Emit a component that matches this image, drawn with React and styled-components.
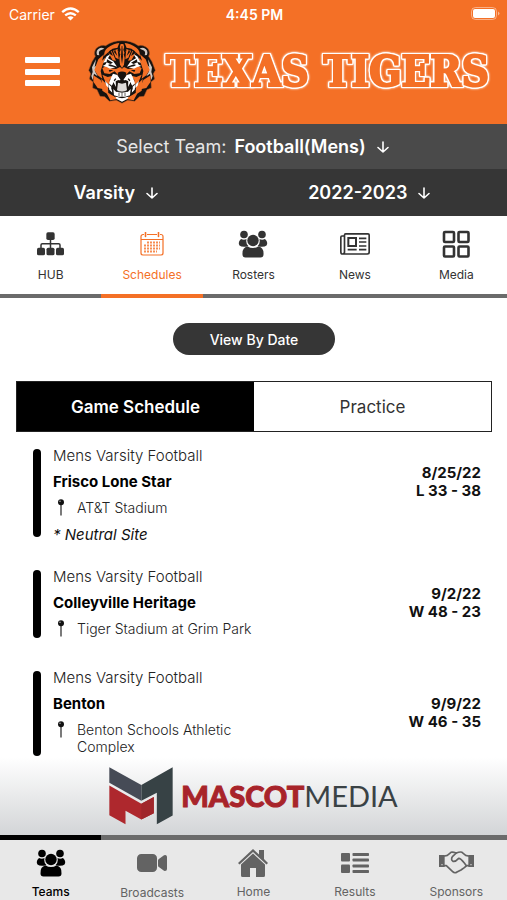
import React from "react";
import styled, { createGlobalStyle } from "styled-components";
import { IoVideocam } from "react-icons/io5";

const GlobalStyle = createGlobalStyle`
  *, *::before, *::after { box-sizing: border-box; }
  body { margin: 0; background: #fff; font-family: Inter, "Liberation Sans", sans-serif; color: #111; }
  button, select { font: inherit; color: inherit; }
  h1, h2, p, ul { margin: 0; padding: 0; }
  ul { list-style: none; }
`;

const Screen = styled.div`
  height: 100vh;
  display: flex;
  flex-direction: column;
`;

const Header = styled.header`
  background: #f47026;
  color: #fff;
`;

const StatusBar = styled.div`
  height: 28px;
  padding: 0 7px 0 9px;
  display: grid;
  grid-template-columns: 1fr auto 1fr;
  align-items: center;
  font-size: 14px;
`;

const Carrier = styled.span`
  display: flex;
  align-items: center;
  gap: 6px;
`;

const Clock = styled.span`
  font-weight: 600;
`;

const BatterySlot = styled.span`
  display: flex;
  justify-content: flex-end;
`;

const Brand = styled.div`
  height: 96px;
  padding: 0 18px 8px 25px;
  display: flex;
  align-items: center;
`;

const MenuButton = styled.button`
  border: 0;
  padding: 0;
  background: none;
  display: flex;
  margin-right: 27px;
`;

const TeamName = styled.h1`
  flex: 1;
  margin-left: 10px;
  display: flex;
  justify-content: space-between;
  font: bold 42px/52px "DejaVu Serif Condensed", "DejaVu Serif", serif;
  color: #f47026;
  white-space: nowrap;
`;

const OutlinedLetter = styled.span`
  display: inline-block;
  -webkit-text-stroke: 2px #f47026;
  filter: drop-shadow(1px 0 0 #fff) drop-shadow(-1px 0 0 #fff) drop-shadow(0 1px 0 #fff) drop-shadow(0 -1px 0 #fff) drop-shadow(0 0 1px #fff);
`;

const PickerBar = styled.div`
  height: ${(p) => p.$height};
  background: ${(p) => p.$tone};
  color: #fff;
  display: grid;
  grid-auto-flow: column;
  grid-auto-columns: 1fr;
  font-size: 18px;
`;

const Picker = styled.label`
  display: flex;
  align-items: center;
  justify-content: center;
  gap: 8px;
  padding-right: ${(p) => p.$inset || "0"};
  color: #e6e6e6;
`;

const PickerSelect = styled.select`
  appearance: none;
  field-sizing: content;
  border: 0;
  padding: 0;
  background: none;
  color: #fff;
  font-weight: 600;
  font-size: 18px;
`;

const TabList = styled.nav`
  display: grid;
  grid-template-columns: repeat(5, 1fr);
`;

const Tab = styled.button`
  height: 82px;
  border: 0;
  border-bottom: 4px solid ${(p) => (p.$active ? "#f47026" : "#6b6b6b")};
  padding: 12px 0 0;
  background: #fff;
  color: ${(p) => (p.$active ? "#f47026" : "#333")};
  display: flex;
  flex-direction: column;
  align-items: center;
  gap: 7px;
  font-size: 12px;
  line-height: 16px;
`;

const IconBox = styled.span`
  height: 32px;
  display: flex;
  align-items: center;
`;

const Content = styled.main`
  flex: 1;
  min-height: 0;
  overflow-y: auto;
  scrollbar-width: none;
  padding: 25px 15px 0 16px;
`;

const DateButton = styled.button`
  display: block;
  width: 162px;
  height: 32px;
  margin: 0 auto 26px;
  border: 0;
  border-radius: 16px;
  background: #363636;
  color: #fff;
  font-size: 14px;
  font-weight: 500;
`;

const Segments = styled.div`
  display: grid;
  grid-template-columns: 1fr 1fr;
  border: 1px solid #222;
`;

const Segment = styled.button`
  height: 49px;
  border: 0;
  background: ${(p) => (p.$active ? "#000" : "#fff")};
  color: ${(p) => (p.$active ? "#fff" : "#333")};
  font-size: 17px;
  font-weight: ${(p) => (p.$active ? 600 : 400)};
`;

const GameList = styled.ul`
  display: flex;
  flex-direction: column;
  gap: 19px;
  padding: 11px 11px 0 17px;
`;

const Game = styled.li`
  display: grid;
  grid-template-columns: 8px 1fr auto;
  column-gap: 12px;
`;

const Marker = styled.span`
  grid-row: 1 / span 2;
  margin: 6px 0 8px;
  border-radius: 4px;
  background: #000;
`;

const Squad = styled.p`
  font-size: 15px;
  font-weight: 300;
  line-height: 26px;
  color: #222;
`;

const Opponent = styled.h2`
  font-size: 15px;
  font-weight: 700;
  line-height: 26px;
  color: #000;
`;

const Venue = styled.p`
  display: flex;
  gap: 12px;
  max-width: 212px;
  padding: 4px 0 9px 4px;
  font-size: 14px;
  line-height: 17px;
  font-weight: 300;
  color: #222;

  svg { flex: none; }
`;

const Score = styled.div`
  align-self: center;
  padding-bottom: 4px;
  text-align: right;
  font-size: 15px;
  font-weight: 700;
  line-height: 18px;
`;

const Note = styled.p`
  grid-column: 2 / span 2;
  font-size: 15px;
  font-style: italic;
  line-height: 20px;
`;

const Sponsor = styled.a`
  height: 78px;
  display: flex;
  align-items: center;
  justify-content: center;
  gap: 8px;
  background: linear-gradient(#fff, #d3d5d7);
  text-decoration: none;
`;

const SponsorName = styled.span`
  font-family: Lato, sans-serif;
  font-size: 29px;
  line-height: 32px;
  font-weight: 400;
  color: #3a4245;
`;

const SponsorLead = styled.b`
  font-weight: 900;
  color: #a8242a;
  -webkit-text-stroke: 1px #a8242a;
`;

const BottomNav = styled.nav`
  display: grid;
  grid-template-columns: repeat(5, 1fr);
  background: #e8e8e8;
`;

const NavItem = styled.a`
  height: 65px;
  border-top: 5px solid ${(p) => (p.$active ? "#000" : "#6b6b6b")};
  padding-top: 7px;
  color: ${(p) => (p.$active ? "#000" : "#636363")};
  display: flex;
  flex-direction: column;
  align-items: center;
  gap: 6px;
  font-size: 12px;
  font-weight: ${(p) => (p.$active ? 500 : 400)};
  line-height: 16px;
  text-decoration: none;
`;

const WifiIcon = () => (
  <svg width="19" height="14" viewBox="0 0 19 14" fill="none" stroke="#fff" strokeWidth="2.4" aria-hidden="true">
    <path d="M1.2 5.2Q9.5-2 17.8 5.2M4.2 8.4q5.3-4.5 10.6 0" />
    <path d="M9.5 13.5 6.4 10.4q3.1-2.5 6.2 0Z" fill="#fff" stroke="none" />
  </svg>
);

const BatteryIcon = () => (
  <svg width="29" height="14" viewBox="0 0 29 14" aria-hidden="true">
    <rect x=".5" y=".5" width="25" height="12" rx="4" fill="none" stroke="#fff" strokeOpacity=".45" />
    <rect x="2" y="2" width="22" height="9" rx="2" fill="#fff" />
    <path d="M27 4.500q3 2 0 4Z" fill="#fff" opacity=".5" />
  </svg>
);

const MenuIcon = () => (
  <svg width="36" height="30" viewBox="0 0 36 30" fill="#fff" aria-hidden="true">
    <rect y="0" width="35" height="6" rx="1" />
    <rect y="12" width="35" height="6" rx="1" />
    <rect y="23" width="35" height="6" rx="1" />
  </svg>
);

const TigerLogo = () => (
  <svg width="68" height="64" viewBox="0 0 204 192" aria-label="Tiger" role="img">
    <path fill="#17120f" stroke="#b45a28" strokeWidth="1.5" d="M102 2Q130 2 151 17Q167 13 181 27Q188 40 182 49L192 65L202 91L196 101L200 117L189 126L190 144L177 149L168 169L154 170L140 184L119 181L102 190L85 181L64 184L50 170L36 169L27 149L14 144L15 126L4 117L8 101L2 91L12 65L22 49Q16 40 23 27Q37 13 53 17Q74 2 102 2Z" />
    {[undefined, "translate(204 0) scale(-1 1)"].map((flip, i) => (
      <g key={i} transform={flip}>
        <path fill="#cfc8c3" d="M27 45Q22 30 36 24Q43 22 49 26L38 31Q30 34 34 46ZM12 82 24 58 20 82 31 68 21 94 29 109 18 101 14 120 10 108 14 96Z" />
        <path fill="#f47026" d="M58 24Q76 10 94 9L88 24Q75 22 64 34L48 48Q48 32 58 24ZM31 58 48 43 42 62 54 51 44 74 38 93 43 116 29 106 19 90ZM16 106 38 120 47 148 29 144 16 125ZM40 117 60 137 61 164 43 152ZM52 153 71 165 92 176 67 181ZM98 12H102V84L96 74 94 54 97 43 91 34ZM75 32 89 27 92 58 83 53ZM61 38 71 33 84 62 74 61ZM43 85 53 78 66 85 84 87 96 81 102 86V112L90 105 80 94 65 102 49 100ZM43 104 59 111 75 107 65 119 66 134 52 125Z" />
        <path fill="#fff" d="M46 68 56 49 67 43 60 55 76 64 87 80 66 73 49 79 57 65ZM44 78 55 72 66 79 82 82 66 86 56 81ZM75 101 88 105 98 120 82 126 71 137 63 130 69 113ZM61 132 70 140 73 158 64 149ZM81 169 102 175V185L86 177ZM51 123 60 131 62 144 55 137Z" />
        <path fill="#17120f" d="M57 58 75 68 67 72 56 67ZM62 90 76 90 65 96ZM77 121 82 115 85 117 80 124ZM94 18 98 29 94 40 89 31ZM81 28 88 48 78 36ZM67 30 75 48 61 39Z" />
      </g>
    ))}
    <path fill="#17120f" d="M89 98Q102 91 115 98L113 108 105 119H99L91 108ZM99 50 102 72 105 50 103 18H101ZM76 127 91 120 102 125 113 120 128 127 134 145 126 169 102 174 78 169 70 145Z" />
    <path fill="#fff" d="M76 126 83 122 84 141ZM128 126 121 122 120 141ZM78 166 76 147 84 155 120 155 128 147 126 166 112 170H92Z" />
    <path fill="#dedbd9" d="M90 128 102 131 114 128 117 151Q102 158 87 151Z" />
    <path fill="none" stroke="#17120f" strokeWidth="2" d="M84 153Q102 162 120 153M93 158V168M102 158V170M111 158V168" />
  </svg>
);

const ArrowIcon = () => (
  <svg width="17" height="14" viewBox="0 0 17 14" fill="none" stroke="#fff" strokeWidth="1.6" strokeLinecap="round" strokeLinejoin="round" aria-hidden="true">
    <path d="M9 2v10M4 7.500 9 12l5-4.500" />
  </svg>
);

const HubIcon = () => (
  <svg width="27" height="24" viewBox="0 0 81 72" fill="currentColor" aria-hidden="true">
    <rect x="28" y="1" width="25" height="23" rx="5" />
    {[0, 28.5, 57].map((x) => <rect key={x} x={x} y="47" width="24" height="23" rx="5" />)}
    <path d="M40.500 22V48M12 48V39Q12 35 16 35H65Q69 35 69 39V48" fill="none" stroke="currentColor" strokeWidth="4.500" />
  </svg>
);

const CalendarIcon = () => (
  <svg width="24" height="24" viewBox="0 0 24 24" fill="none" stroke="currentColor" strokeWidth="1.2" aria-hidden="true">
    <path d="M4 2.500H3A2 2 0 0 0 1 4.500V21A2 2 0 0 0 3 23H21A2 2 0 0 0 23 21V4.500A2 2 0 0 0 21 2.500H20M7 2.500H17M1 7.500H23" />
    <path d="M5.500.5V4.500M18.500.5V4.500" strokeWidth="1.600" strokeLinecap="round" />
    <path d="M7 10.500H20M4 13.500H20M4 16.500H20M4 19.500H17" strokeWidth="1.800" strokeDasharray="2 1" opacity=".8" />
  </svg>
);

const GroupIcon = () => (
  <svg width="30" height="28" viewBox="0 0 30 28" fill="currentColor" aria-hidden="true">
    <circle cx="6" cy="4.500" r="3.800" />
    <circle cx="24" cy="4.500" r="3.800" />
    <path d="M3 9Q6 10.500 8.500 9Q7.500 14 10.500 16.200Q4 17.500 1.500 15.500Q-.5 12 3 9ZM27 9Q24 10.500 21.500 9Q22.500 14 19.500 16.200Q26 17.500 28.500 15.500Q30.500 12 27 9Z" />
    <circle cx="15" cy="10.500" r="5.700" />
    <path d="M9.500 16.500Q15 19.500 20.500 16.500Q26 17.500 25.500 24.500Q25.500 27.500 22.500 27.500H7.500Q4.500 27.500 4.500 24.500Q4 17.500 9.500 16.500Z" />
  </svg>
);

const NewsIcon = () => (
  <svg width="30" height="22" viewBox="0 0 90 66" fill="none" stroke="currentColor" strokeWidth="5" aria-hidden="true">
    <path d="M13 9H6Q2.500 9 2.500 13V56Q2.500 63 8 63Q13.500 63 13.500 57V6Q13.500 2.500 17 2.500H84Q87.500 2.500 87.500 6V58Q87.500 63 82 63H8" />
    <rect x="25" y="15" width="23" height="24" strokeWidth="6" />
    <path d="M57 16H79M57 27H79M57 39H79M23 50H50M57 50H79" />
  </svg>
);

const GridIcon = () => (
  <svg width="28" height="28" viewBox="0 0 28 28" fill="none" stroke="currentColor" strokeWidth="2.600" aria-hidden="true">
    {[2, 16.5].map((y) => [2, 16.5].map((x) => <rect key={`${x}-${y}`} x={x} y={y} width="10" height="10" rx="1" />))}
  </svg>
);

const HomeIcon = () => (
  <svg width="30" height="28" viewBox="0 0 30 28" fill="currentColor" aria-hidden="true">
    <path d="M15 0 21 5.500V1H26V10L30 14 28.500 15.500 15 3 1.500 15.500 0 14Z" />
    <path d="M15 4.500 27 15.500V26.500Q27 28 25.500 28H18V19H12V28H4.500Q3 28 3 26.500V15.500Z" />
  </svg>
);

const ListIcon = () => (
  <svg width="28" height="20" viewBox="0 0 28 20" fill="currentColor" aria-hidden="true">
    <rect width="9" height="8.500" rx="1" />
    <rect y="11.500" width="9" height="8.500" rx="1" />
    {[0, 5.5, 11.5, 17].map((y) => <rect key={y} x="11.500" y={y} width="16.500" height="3" rx=".8" />)}
  </svg>
);

const HandshakeIcon = () => (
  <svg width="35" height="23" viewBox="0 0 105 69" fill="none" stroke="currentColor" strokeWidth="5" strokeLinejoin="round" strokeLinecap="round" aria-hidden="true">
    <path d="M0 12H17V48H0ZM88 12H105V48H88Z" fill="currentColor" stroke="none" />
    <path d="M17 15 25 13 36 4Q40 2 52 6Q64 1 69 4L80 13 88 15M17 44H22L41 62Q47 68 54 63L66 57 76 50 83 44H88" />
    <path d="M52 6 41 16Q34 26 42 31Q49 33 59 22Q64 21 76 36L82 44" />
    <circle cx="9" cy="41" r="2" fill="#e8e8e8" stroke="none" />
    <circle cx="96" cy="41" r="2" fill="#e8e8e8" stroke="none" />
  </svg>
);

const PinIcon = () => (
  <svg width="8" height="17" viewBox="0 0 8 17" aria-hidden="true">
    <path d="M4 5V16.500" stroke="#333" strokeWidth="1.300" />
    <circle cx="4" cy="3.200" r="3" fill="#111" />
    <circle cx="3" cy="2.300" r=".8" fill="#aaa" />
  </svg>
);

const SponsorMark = () => (
  <svg width="64" height="58" viewBox="0 0 190 170" aria-hidden="true">
    <path fill="#464b56" d="M1 0 96 52V99L1 46Z" />
    <path fill="#374245" d="M189 0V143L142 169V75L96 99V52Z" />
    <path fill="#ae282d" d="M1 54 96 108 133 88V136L96 155 49 129V169L1 142Z" />
    <path fill="#a0262b" d="M96 108 133 88V136L96 155Z" />
  </svg>
);

const tabs = [
  { label: "HUB", icon: <HubIcon /> },
  { label: "Schedules", icon: <CalendarIcon />, active: true },
  { label: "Rosters", icon: <GroupIcon /> },
  { label: "News", icon: <NewsIcon /> },
  { label: "Media", icon: <GridIcon /> },
];

const games = [
  { opponent: "Frisco Lone Star", venue: "AT&T Stadium", date: "8/25/22", score: "L 33 - 38", note: "* Neutral Site" },
  { opponent: "Colleyville Heritage", venue: "Tiger Stadium at Grim Park", date: "9/2/22", score: "W 48 - 23" },
  { opponent: "Benton", venue: "Benton Schools Athletic Complex", date: "9/9/22", score: "W 46 - 35" },
];

const navItems = [
  { label: "Teams", icon: <GroupIcon />, active: true },
  { label: "Broadcasts", icon: <IoVideocam size={32} /> },
  { label: "Home", icon: <HomeIcon /> },
  { label: "Results", icon: <ListIcon /> },
  { label: "Sponsors", icon: <HandshakeIcon /> },
];

const OutlinedWord = ({ text }) => (
  <span>
    {[...text].map((letter, i) => <OutlinedLetter key={i}>{letter}</OutlinedLetter>)}
  </span>
);

export default function App() {
  return (
    <Screen>
      <GlobalStyle />
      <Header>
        <StatusBar>
          <Carrier>Carrier <WifiIcon /></Carrier>
          <Clock>4:45 PM</Clock>
          <BatterySlot><BatteryIcon /></BatterySlot>
        </StatusBar>
        <Brand>
          <MenuButton aria-label="Menu"><MenuIcon /></MenuButton>
          <TigerLogo />
          <TeamName><OutlinedWord text="TEXAS" /> <OutlinedWord text="TIGERS" /></TeamName>
        </Brand>
      </Header>
      <PickerBar $height="45px" $tone="#4a4a4a">
        <Picker>
          Select Team:
          <PickerSelect><option>Football(Mens)</option></PickerSelect>
          <ArrowIcon />
        </Picker>
      </PickerBar>
      <PickerBar $height="47px" $tone="#363636">
        <Picker $inset="20px">
          <PickerSelect aria-label="Level"><option>Varsity</option></PickerSelect>
          <ArrowIcon />
        </Picker>
        <Picker $inset="20px">
          <PickerSelect aria-label="Season"><option>2022-2023</option></PickerSelect>
          <ArrowIcon />
        </Picker>
      </PickerBar>
      <TabList>
        {tabs.map((t) => (
          <Tab key={t.label} $active={t.active}>
            <IconBox>{t.icon}</IconBox>
            {t.label}
          </Tab>
        ))}
      </TabList>
      <Content>
        <DateButton>View By Date</DateButton>
        <Segments>
          <Segment $active>Game Schedule</Segment>
          <Segment>Practice</Segment>
        </Segments>
        <GameList>
          {games.map((g) => (
            <Game key={g.opponent}>
              <Marker />
              <div>
                <Squad>Mens Varsity Football</Squad>
                <Opponent>{g.opponent}</Opponent>
                <Venue><PinIcon />{g.venue}</Venue>
              </div>
              <Score>
                <p>{g.date}</p>
                <p>{g.score}</p>
              </Score>
              {g.note && <Note>{g.note}</Note>}
            </Game>
          ))}
        </GameList>
      </Content>
      <Sponsor href="#sponsor">
        <SponsorMark />
        <SponsorName><SponsorLead>MASCOT</SponsorLead>MEDIA</SponsorName>
      </Sponsor>
      <BottomNav>
        {navItems.map((n) => (
          <NavItem key={n.label} href={`#${n.label.toLowerCase()}`} $active={n.active}>
            <IconBox>{n.icon}</IconBox>
            {n.label}
          </NavItem>
        ))}
      </BottomNav>
    </Screen>
  );
}
